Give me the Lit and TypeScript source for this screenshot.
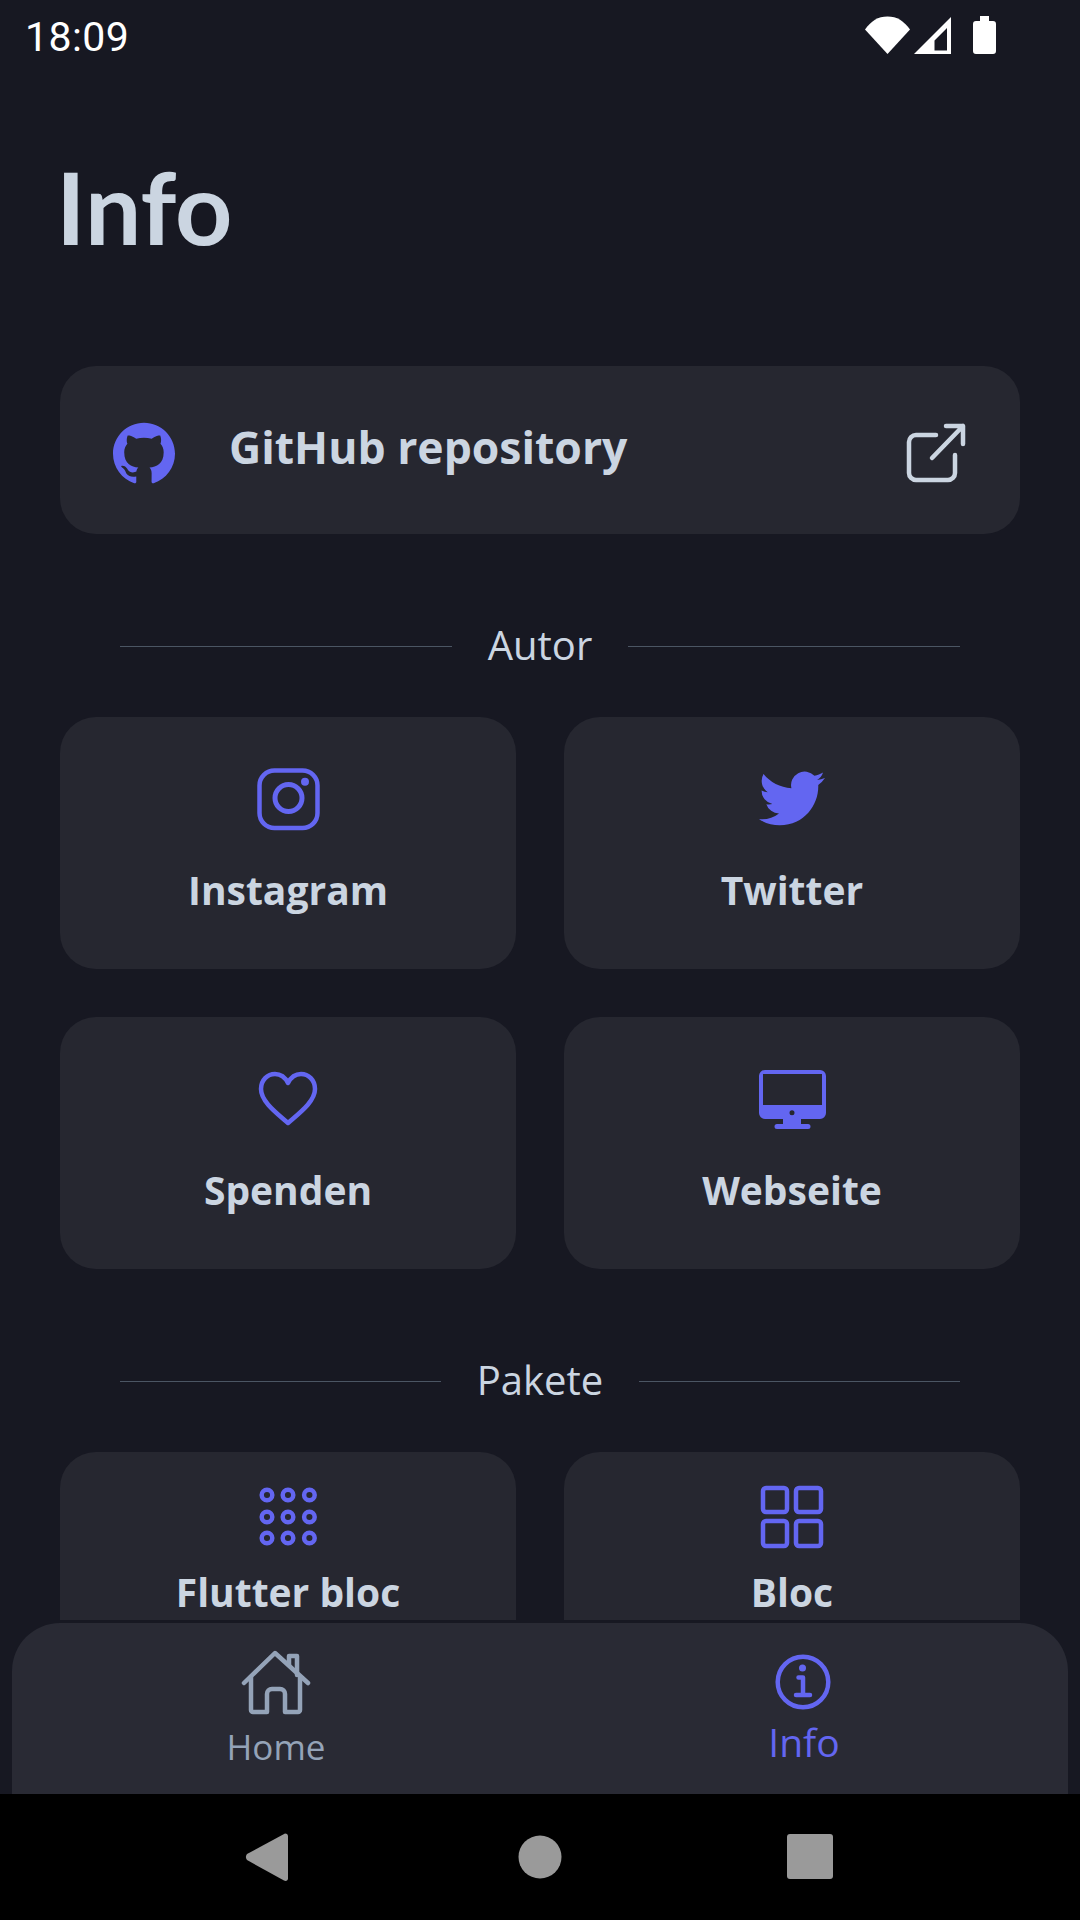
import { LitElement, html, css, svg } from "lit";
import { customElement } from "lit/decorators.js";

const github = svg`<path fill="currentColor" d="M12 .297c-6.63 0-12 5.373-12 12 0 5.303 3.438 9.8 8.205 11.385.6.113.82-.258.82-.577 0-.285-.01-1.04-.015-2.04-3.338.724-4.042-1.61-4.042-1.61C4.422 18.07 3.633 17.7 3.633 17.7c-1.087-.744.084-.729.084-.729 1.205.084 1.838 1.236 1.838 1.236 1.07 1.835 2.809 1.305 3.495.998.108-.776.417-1.305.76-1.605-2.665-.3-5.466-1.332-5.466-5.93 0-1.31.465-2.38 1.235-3.22-.135-.303-.54-1.523.105-3.176 0 0 1.005-.322 3.3 1.23.96-.267 1.98-.399 3-.405 1.02.006 2.04.138 3 .405 2.28-1.552 3.285-1.23 3.285-1.23.645 1.653.24 2.873.12 3.176.765.84 1.23 1.91 1.23 3.22 0 4.61-2.805 5.625-5.475 5.92.42.36.81 1.096.81 2.22 0 1.606-.015 2.896-.03 3.286 0 .315.21.69.825.57C20.565 22.092 24 17.592 24 12.297c0-6.627-5.373-12-12-12"/>`;

// all card icons are drawn on a 72 unit box
const icons: Record<string, unknown> = {
  instagram: svg`<rect x="7.5" y="7.5" width="58" height="57.500" rx="15" fill="none" stroke="currentColor" stroke-width="4.5"/>
    <circle cx="36.500" cy="35" r="13.500" fill="none" stroke="currentColor" stroke-width="5"/>
    <circle cx="53" cy="18.700" r="4" fill="currentColor"/>`,
  twitter: svg`<path transform="translate(3 2.4) scale(2.75)" fill="currentColor" d="M23.953 4.57a10 10 0 01-2.825.775 4.958 4.958 0 002.163-2.723c-.951.555-2.005.959-3.127 1.184a4.92 4.92 0 00-8.384 4.482C7.69 8.095 4.067 6.13 1.64 3.162a4.822 4.822 0 00-.666 2.475c0 1.71.87 3.213 2.188 4.096a4.904 4.904 0 01-2.228-.616v.06a4.923 4.923 0 003.946 4.827 4.996 4.996 0 01-2.212.085 4.936 4.936 0 004.604 3.417 9.867 9.867 0 01-6.102 2.105c-.39 0-.779-.023-1.17-.067a13.995 13.995 0 007.557 2.209c9.053 0 13.998-7.496 13.998-13.985 0-.21 0-.42-.015-.63A9.935 9.935 0 0024 4.59z"/>`,
  heart: svg`<path fill="none" stroke="currentColor" stroke-width="4.5" stroke-linejoin="round" d="M36 60C26 51 9 39 9 26 9 17 15.500 11 23 11c6 0 10.500 4 13 9 2.500-5 7-9 13-9 7.500 0 14 6 14 15 0 13-17 25-27 34z"/>`,
  desktop: svg`<path fill="currentColor" fill-rule="evenodd" d="M9 7h55a6 6 0 0 1 6 6v37a6 6 0 0 1-6 6H9a6 6 0 0 1-6-6V13a6 6 0 0 1 6-6zM7 11v31h59V11zM36 47.200a2.500 2.500 0 1 0 0 5 2.500 2.500 0 0 0 0-5z"/>
    <path fill="currentColor" d="M27 56h18v5h7a2.500 2.500 0 0 1 0 5H21a2.500 2.500 0 0 1 0-5h6z"/>`,
  dots: svg`<g fill="none" stroke="currentColor" stroke-width="4.5">
    ${[14, 36, 57].map((y) => [15, 36, 57.4].map((x) => svg`<circle cx=${x} cy=${y} r="5.300"/>`))}
  </g>`,
  grid: svg`<g fill="none" stroke="currentColor" stroke-width="4.5">
    <rect x="7" y="7" width="24" height="24" rx="3"/><rect x="40" y="7" width="25" height="24" rx="3"/>
    <rect x="7" y="40" width="24" height="25" rx="3"/><rect x="40" y="40" width="25" height="25" rx="3"/>
  </g>`,
};

const author = [
  { icon: "instagram", label: "Instagram" },
  { icon: "twitter", label: "Twitter" },
  { icon: "heart", label: "Spenden" },
  { icon: "desktop", label: "Webseite" },
];
const packages = [
  { icon: "dots", label: "Flutter bloc" },
  { icon: "grid", label: "Bloc" },
];

@customElement("app-root")
export class AppRoot extends LitElement {
  static styles = css`
    :host {
      display: block;
      width: 1080px;
      height: 1920px;
      background: #171822;
      font-family: "Open Sans", "Noto Sans", sans-serif;
      color: #cbd5e1;
      overflow: hidden;
    }
    .status {
      height: 58px;
      display: flex;
      align-items: center;
      justify-content: space-between;
      padding: 0 84px 0 25px;
      font-family: Roboto, sans-serif;
      font-size: 41px;
      color: #fff;
    }
    .status span {
      margin-top: 15px;
      letter-spacing: 0.4px;
    }
    .status svg {
      display: block;
      margin-top: 12px;
    }
    main {
      height: 1562px;
      overflow: hidden;
      padding: 0 60px;
    }
    h1 {
      margin: 88px 0 100px -4px;
      font-family: Lato, "Open Sans", sans-serif;
      font-size: 100px;
      line-height: 120px;
      font-weight: 700;
    }
    .repo {
      height: 168px;
      box-sizing: border-box;
      padding: 6px 48px 0 53px;
      display: flex;
      align-items: center;
      background: #262730;
      border-radius: 36px;
    }
    .repo .mark {
      color: #6366f1;
      display: block;
    }
    .repo span {
      flex: 1;
      margin: -12px 0 0 54px;
      font-size: 44.500px;
      line-height: 60px;
      font-weight: 700;
    }
    .divider {
      height: 60px;
      display: flex;
      align-items: center;
      gap: 36px;
      padding: 0 60px;
      font-size: 40px;
      line-height: 60px;
      margin: 82px 0 41px;
    }
    .divider i {
      flex: 1;
      height: 1px;
      background: #4b5563;
    }
    .divider span {
      margin-top: -2px;
    }
    .grid {
      display: grid;
      grid-template-columns: 456px 456px;
      grid-auto-rows: 252px;
      gap: 48px;
    }
    .card {
      display: flex;
      flex-direction: column;
      align-items: center;
      padding-top: 46px;
      background: #262730;
      border-radius: 36px;
    }
    .card svg {
      display: block;
      color: #6366f1;
    }
    .card span {
      margin-top: 25px;
      font-size: 39px;
      line-height: 60px;
      font-weight: 700;
    }
    .grid.tight .card {
      padding-top: 29px;
    }
    .grid.tight .card span {
      margin-top: 9px;
    }
    nav {
      height: 171px;
      margin: 3px 12px 0;
      display: flex;
      background: #292a34;
      border-radius: 48px 48px 0 0;
    }
    .tab {
      flex: 1;
      display: flex;
      flex-direction: column;
      align-items: center;
      font-size: 35px;
      line-height: 44px;
      color: #94a3b8;
    }
    .tab svg {
      display: block;
    }
    .tab.home {
      padding-top: 25px;
    }
    .tab.home span {
      margin-top: 5px;
    }
    .tab.info {
      padding-top: 23px;
      font-size: 39px;
      color: #6366f1;
    }
    .tab.info span {
      margin-top: 2px;
    }
    .system {
      height: 126px;
      background: #000;
    }
    .system svg {
      display: block;
    }
  `;

  private renderCards(items: { icon: string; label: string }[], tight = false) {
    return html`
      <div class="grid ${tight ? "tight" : ""}">
        ${items.map(
          (c) => html`
            <div class="card">
              <svg width="72" height="72" viewBox="0 0 72 72">${icons[c.icon]}</svg>
              <span>${c.label}</span>
            </div>
          `
        )}
      </div>
    `;
  }

  render() {
    return html`
      <div class="status">
        <span>18:09</span>
        <svg width="131" height="38" viewBox="865 16 131 38" fill="#fff">
          <path d="M865 29.500C871 21 878 16.500 887.500 16.500S904 21 910 29.500L887.500 54z"/>
          <path fill-rule="evenodd" d="M914 54L951 17v37zM934.500 50.500H947V28L934.500 40.500z"/>
          <path d="M980 21v-5h9v5h4a3 3 0 0 1 3 3v27a3 3 0 0 1-3 3h-17a3 3 0 0 1-3-3V24a3 3 0 0 1 3-3z"/>
        </svg>
      </div>
      <main>
        <h1>Info</h1>
        <div class="repo">
          <svg class="mark" width="62" height="62" viewBox="0 0 24 24">${github}</svg>
          <span>GitHub repository</span>
          <svg width="72" height="72" viewBox="0 0 72 72" fill="none" stroke="#cbd5e1" stroke-width="4.5" stroke-linecap="round" stroke-linejoin="round">
            <path d="M36 18H16a7 7 0 0 0-7 7v31a7 7 0 0 0 7 7h32a7 7 0 0 0 7-7V38"/>
            <path d="M46 9h17v18M63 9L32 41"/>
          </svg>
        </div>
        <div class="divider"><i></i><span>Autor</span><i></i></div>
        ${this.renderCards(author)}
        <div class="divider"><i></i><span>Pakete</span><i></i></div>
        ${this.renderCards(packages, true)}
      </main>
      <nav>
        <div class="tab home">
          <svg width="72" height="72" viewBox="0 0 72 72" fill="none" stroke="currentColor" stroke-width="4.5" stroke-linecap="round" stroke-linejoin="round">
            <path d="M4 35L35 5l33 30"/>
            <path d="M11 29v33a2 2 0 0 0 2 2h14V46a5 5 0 0 1 5-5h8a5 5 0 0 1 5 5v18h13a2 2 0 0 0 2-2V29"/>
            <path d="M49 17V8h8v19"/>
          </svg>
          <span>Home</span>
        </div>
        <div class="tab info">
          <svg width="72" height="72" viewBox="0 0 72 72" fill="none" stroke="currentColor" stroke-width="4.5" stroke-linecap="round" stroke-linejoin="round">
            <circle cx="35" cy="36" r="25.300"/>
            <circle cx="34.500" cy="22" r="3.500" fill="currentColor" stroke="none"/>
            <path d="M30.500 31.500h4.500v17M28 49h14"/>
          </svg>
          <span>Info</span>
        </div>
      </nav>
      <div class="system">
        <svg width="1080" height="126" viewBox="0 1794 1080 126" fill="#9a9a9a">
          <path d="M285 1833.500c2 0 3 1 3 3v42c0 2-2 3-4 2L247 1860c-1.500-2-1.500-4 0-6z"/>
          <circle cx="540" cy="1857" r="21.500"/>
          <rect x="787" y="1834" width="46" height="45" rx="3"/>
        </svg>
      </div>
    `;
  }
}
